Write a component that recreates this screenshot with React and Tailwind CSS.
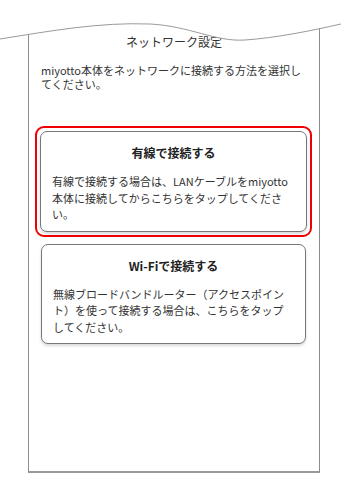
export default function App() {
  const font = { fontFamily: '"Noto Sans CJK JP", "Noto Sans", sans-serif' };
  return (
    <div className="relative w-[350px] h-[482px] bg-white overflow-hidden text-[#333]" style={font}>
      <div className="pt-[20px]">
        <div className="ml-[28px] w-[292px] h-[453px] border-x border-x-[#8c8c8c] border-b-2 border-b-[#999]">
          <div className="pt-[14px] text-center text-[12px] leading-[16px]">ネットワーク設定</div>
          <p className="mt-[14px] px-[12px] text-[11px] leading-[13.5px]">
            miyotto本体をネットワークに接続する方法を選択してください。
          </p>
          <div className="mt-[35px] px-[6px] mr-[1px]">
            <div className="rounded-[9px] border-2 border-[#f00000] p-[3px]">
              <Card title="有線で接続する" body="有線で接続する場合は、LANケーブルをmiyotto本体に接続してからこちらをタップしてください。" />
            </div>
          </div>
          <div className="mt-[7px] pl-[12px] pr-[13px]">
            <Card title="Wi-Fiで接続する" body="無線ブロードバンドルーター（アクセスポイント）を使って接続する場合は、こちらをタップしてください。" />
          </div>
        </div>
      </div>
      <svg className="absolute left-0 top-0" width="350" height="50" viewBox="0 0 350 50">
        <path d="M0,0 L0,39 C50,31 100,22 150,24 C190,26 215,42 245,40 C275,38 310,31 341,24 L350,24 L350,0 Z" fill="#fff" />
        <path d="M0,39 C50,31 100,22 150,24 C190,26 215,42 245,40 C275,38 310,31 341,24" fill="none" stroke="#9a9a9a" strokeWidth="1" />
      </svg>
    </div>
  );
}

function Card({ title, body }) {
  return (
    <div className="rounded-[7px] border border-[#777] bg-white px-[11px] pt-[13px] pb-[8px] shadow-[0_2px_3px_rgba(0,0,0,0.15)]">
      <div className="text-center text-[12px] leading-[16px] font-bold text-[#222]">{title}</div>
      <p className="mt-[12px] text-[11px] leading-[16.5px] min-h-[49px]">{body}</p>
    </div>
  );
}
